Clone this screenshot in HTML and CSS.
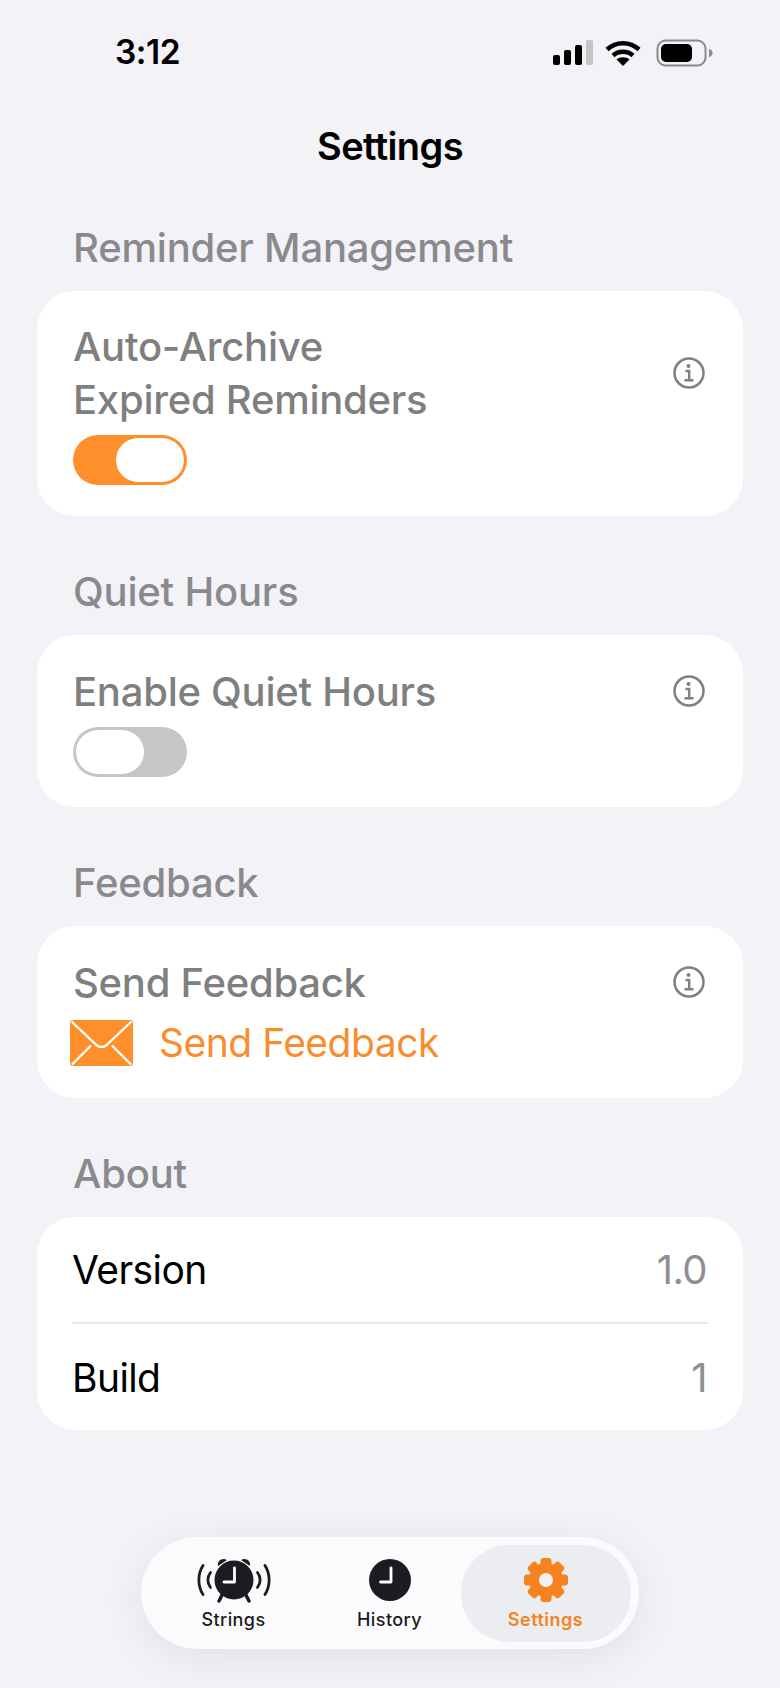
FILE: index.html
```html
<!DOCTYPE html>
<html lang="en">

<head>
    <meta charset="UTF-8">
    <meta name="viewport" content="width=device-width, initial-scale=1.0">
    <title>Settings</title>
    <link rel="stylesheet" href="styles.css">
</head>

<body>
    <div class="screen">
        <div class="status-bar">
            <span class="time">3:12</span>
            <div class="status-icons">
                <svg class="signal" width="40" height="26" viewBox="0 0 40 26">
                    <rect x="0" y="15" width="7" height="10" rx="2" fill="#000" />
                    <rect x="11" y="10" width="7" height="15" rx="2" fill="#000" />
                    <rect x="22" y="5" width="7" height="20" rx="2" fill="#000" />
                    <rect x="33" y="0" width="7" height="25" rx="2" fill="#c4c4c8" />
                </svg>
                <svg class="wifi" width="36" height="26" viewBox="0 0 36 26">
                    <path d="M2 9.500C11 1 25 1 34 9.500M8 15.500C13.500 10.500 22.500 10.500 28 15.500" fill="none" stroke="#000" stroke-width="4.500" stroke-linecap="butt" />
                    <path d="M18 26L11.500 19.500C15 16.500 21 16.500 24.500 19.500Z" fill="#000" />
                </svg>
                <svg class="battery" width="58" height="28" viewBox="0 0 58 28">
                    <rect x="1.500" y="1.500" width="48" height="25" rx="8" fill="none" stroke="#8a8a8e" stroke-width="2" />
                    <rect x="5" y="5" width="31" height="18" rx="5" fill="#000" />
                    <path d="M53 10C55.500 10.500 56.500 12 56.500 14C56.500 16 55.500 17.500 53 18Z" fill="#8a8a8e" />
                </svg>
            </div>
        </div>

        <h1 class="nav-title">Settings</h1>

        <h2 class="section-title">Reminder Management</h2>
        <section class="card card-archive">
            <div class="card-text">
                <div class="row-title">Auto-Archive<br>Expired Reminders</div>
                <div class="toggle toggle-on"><span class="knob"></span></div>
            </div>
            <svg class="info" width="34" height="34" viewBox="0 0 34 34">
                <circle cx="17" cy="17" r="14.500" fill="none" stroke="#808080" stroke-width="2.500" />
                <circle cx="16.500" cy="10" r="2" fill="#808080" />
                <path d="M13.500 15H17.200V24M12.500 24.200H21.500" fill="none" stroke="#808080" stroke-width="2.400" />
            </svg>
        </section>

        <h2 class="section-title">Quiet Hours</h2>
        <section class="card">
            <div class="card-text">
                <div class="row-title">Enable Quiet Hours</div>
                <div class="toggle toggle-off"><span class="knob"></span></div>
            </div>
            <svg class="info" width="34" height="34" viewBox="0 0 34 34">
                <circle cx="17" cy="17" r="14.500" fill="none" stroke="#808080" stroke-width="2.500" />
                <circle cx="16.500" cy="10" r="2" fill="#808080" />
                <path d="M13.500 15H17.200V24M12.500 24.200H21.500" fill="none" stroke="#808080" stroke-width="2.400" />
            </svg>
        </section>

        <h2 class="section-title">Feedback</h2>
        <section class="card">
            <div class="card-text">
                <div class="row-title">Send Feedback</div>
                <div class="send-row">
                    <svg class="mail" width="63" height="46" viewBox="0 0 63 46">
                        <rect x="0" y="0" width="63" height="46" rx="3" fill="#ff8f2a" />
                        <path d="M1.500 1.500L27 25.500C29.500 27.500 33.500 27.500 36 25.500L61.500 1.500M2 44.500L21 25.500M61 44.500L42 25.500" fill="none" stroke="#fff" stroke-width="2.400" />
                    </svg>
                    <span class="send-label">Send Feedback</span>
                </div>
            </div>
            <svg class="info" width="34" height="34" viewBox="0 0 34 34">
                <circle cx="17" cy="17" r="14.500" fill="none" stroke="#808080" stroke-width="2.500" />
                <circle cx="16.500" cy="10" r="2" fill="#808080" />
                <path d="M13.500 15H17.200V24M12.500 24.200H21.500" fill="none" stroke="#808080" stroke-width="2.400" />
            </svg>
        </section>

        <h2 class="section-title">About</h2>
        <section class="card card-about">
            <div class="about-row">
                <span>Version</span>
                <span class="about-value">1.0</span>
            </div>
            <div class="about-row about-row-last">
                <span>Build</span>
                <span class="about-value">1</span>
            </div>
        </section>

        <div class="tab-wrap">
            <nav class="tab-bar">
                <div class="tab">
                    <svg class="tab-icon" width="76" height="46" viewBox="0 0 76 46">
                        <path d="M7 8.500C1.500 17 1.500 29 7 37.500M14.500 15.500C11 20 11 26 14.500 30.500M69 8.500C74.500 17 74.500 29 69 37.500M61.500 15.500C65 20 65 26 61.500 30.500" fill="none" stroke="#1c1c20" stroke-width="2.800" stroke-linecap="round" />
                        <circle cx="38" cy="23" r="19.500" fill="#1c1c20" />
                        <path d="M22 9C21 4 26 0 31 3ZM54 9C55 4 50 0 45 3Z" fill="#1c1c20" />
                        <path d="M26 38L23 44M50 38L53 44" fill="none" stroke="#1c1c20" stroke-width="3.500" stroke-linecap="round" />
                        <path d="M38.500 11V25H28" fill="none" stroke="#fff" stroke-width="2.800" stroke-linejoin="round" stroke-linecap="round" />
                    </svg>
                    <span class="tab-label">Strings</span>
                </div>
                <div class="tab">
                    <svg class="tab-icon" width="44" height="46" viewBox="0 0 44 46">
                        <circle cx="22" cy="23" r="21" fill="#1c1c20" />
                        <path d="M23 11V25H12.500" fill="none" stroke="#fff" stroke-width="2.800" stroke-linejoin="round" stroke-linecap="round" />
                    </svg>
                    <span class="tab-label">History</span>
                </div>
                <div class="tab tab-active">
                    <svg class="tab-icon" width="46" height="46" viewBox="0 0 46 46">
                        <g fill="#f5821f">
                            <circle cx="23" cy="23" r="17" />
                            <rect x="17.500" y="1" width="11" height="44" rx="3" />
                            <rect x="17.500" y="1" width="11" height="44" rx="3" transform="rotate(45 23 23)" />
                            <rect x="17.500" y="1" width="11" height="44" rx="3" transform="rotate(90 23 23)" />
                            <rect x="17.500" y="1" width="11" height="44" rx="3" transform="rotate(135 23 23)" />
                        </g>
                        <circle cx="23" cy="23" r="7" fill="#f1f1f4" />
                    </svg>
                    <span class="tab-label">Settings</span>
                </div>
            </nav>
        </div>
    </div>
</body>

</html>
```

FILE: styles.css
```css
* {
    box-sizing: border-box;
    margin: 0;
    padding: 0;
}

body {
    background: #f2f2f7;
    font-family: Inter, "Liberation Sans", sans-serif;
    color: #000;
}

.screen {
    display: flex;
    flex-direction: column;
    height: 1688px;
    overflow: hidden;
}

.status-bar {
    display: flex;
    justify-content: space-between;
    align-items: center;
    height: 52px;
    margin-top: 26px;
    padding: 0 66px 0 115px;
}

.time {
    font-size: 33.5px;
    font-weight: 600;
    letter-spacing: -0.5px;
}

.status-icons {
    display: flex;
    align-items: center;
    gap: 14px;
    margin-top: 2px;
}

.signal {
    margin-right: -2px;
}

.battery {
    margin-left: 1px;
}

.nav-title {
    margin-top: 42px;
    text-align: center;
    font-size: 38px;
    line-height: 52px;
    font-weight: 600;
    letter-spacing: -0.6px;
}

.section-title {
    margin: 0 0 18px 73px;
    font-size: 40px;
    line-height: 50px;
    font-weight: 550;
    letter-spacing: -0.2px;
    color: #8a8a8e;
}

.nav-title + .section-title {
    margin-top: 51px;
}

.card {
    display: flex;
    justify-content: space-between;
    align-items: flex-start;
    height: 172px;
    margin: 0 37px 51px;
    padding: 30px 37px 0 36px;
    background: #fff;
    border-radius: 38px;
}

.card-archive {
    height: 225px;
    padding-top: 29px;
}

.card-about {
    display: block;
    height: 213px;
    padding: 0 35px;
}

.row-title {
    font-size: 40px;
    line-height: 53px;
    font-weight: 550;
    letter-spacing: -0.25px;
    color: #7f7f7f;
}

.toggle {
    display: flex;
    width: 114px;
    height: 50px;
    margin-top: 9px;
    padding: 3px;
    border-radius: 25px;
}

.knob {
    display: block;
    width: 68px;
    height: 44px;
    background: #fff;
    border-radius: 22px;
}

.toggle-on {
    justify-content: flex-end;
    background: #ff8f2a;
}

.toggle-off {
    background: #c6c6c6;
}

.info {
    margin-top: 9px;
}

.card-archive .info {
    margin-top: 36px;
}

.send-row {
    display: flex;
    align-items: center;
    gap: 26px;
    margin-left: -3px;
    margin-top: 10px;
}

.send-label {
    font-size: 39px;
    line-height: 48px;
    letter-spacing: -0.5px;
    color: #f98d2d;
}

.about-row {
    display: flex;
    justify-content: space-between;
    align-items: center;
    height: 107px;
    font-size: 39px;
    letter-spacing: -0.6px;
    border-bottom: 2px solid #e9e9ec;
}

.about-row-last {
    border-bottom: none;
}

.about-value {
    font-size: 40px;
    padding-right: 1px;
    color: #8e8e93;
}

.tab-wrap {
    display: flex;
    justify-content: center;
    margin-top: auto;
    padding-bottom: 39px;
}

.tab-bar {
    display: flex;
    align-items: center;
    width: 498px;
    height: 112px;
    padding-left: 14.5px;
    background: #fbfbfe;
    border-radius: 56px;
    box-shadow: 0 8px 40px rgba(0, 0, 0, 0.08);
}

.tab {
    display: flex;
    flex: none;
    flex-direction: column;
    align-items: center;
    justify-content: center;
    width: 156px;
    height: 97px;
    padding-top: 2px;
    border-radius: 48px;
}

.tab-icon {
    margin-bottom: 6px;
}

.tab-label {
    font-size: 18px;
    line-height: 22px;
    font-weight: 500;
    letter-spacing: 0.4px;
    color: #1c1c20;
}

.tab-active {
    width: 170px;
    margin-left: -7px;
    background: #ecedf0;
}

.tab-active .tab-label {
    font-weight: 600;
    letter-spacing: 0.5px;
    color: #f5821f;
}
```
